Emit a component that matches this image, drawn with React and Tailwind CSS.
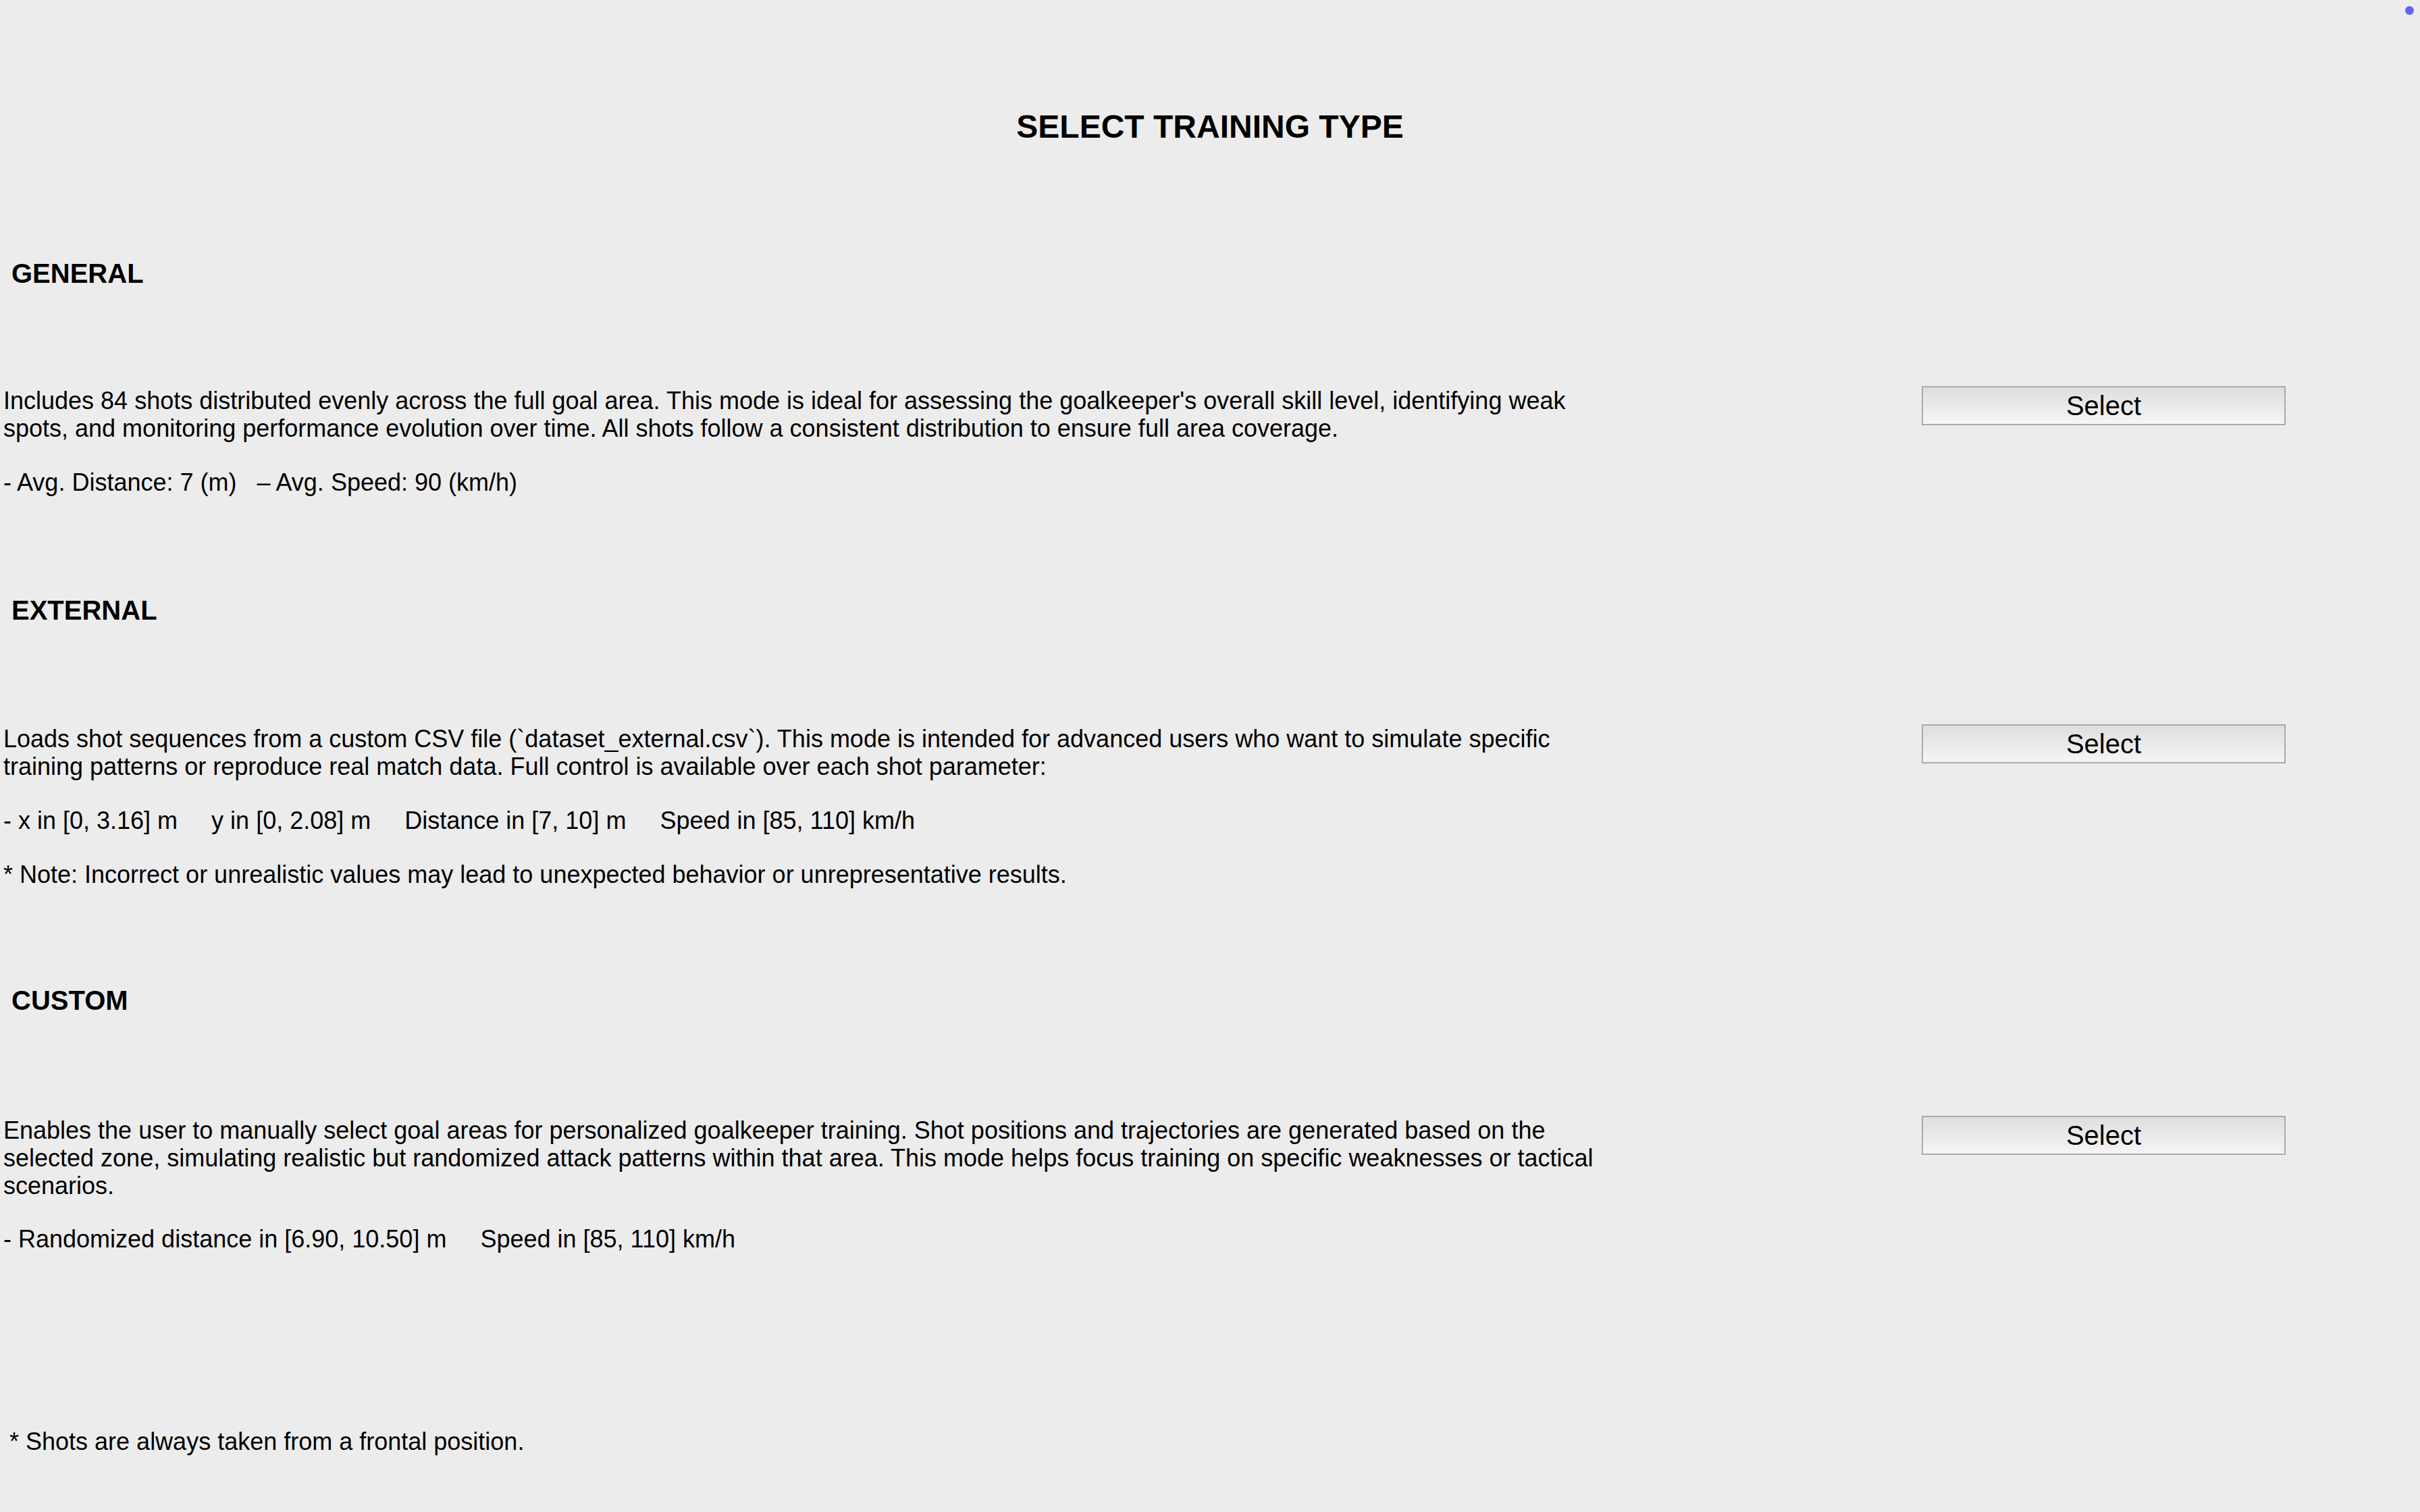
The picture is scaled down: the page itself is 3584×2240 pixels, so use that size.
import React from "react";

function SelectButton() {
  return (
    <button className="ml-[456px] mt-0 flex h-[58px] w-[539px] shrink-0 items-center justify-center border-2 border-[#aaaaaa] bg-gradient-to-b from-[#dedede] to-[#f5f5f5] text-[40px] leading-none text-black">
      Select
    </button>
  );
}

function Row({ children, className }) {
  return (
    <div className={"flex items-start " + className}>
      <div className="w-[2390px] shrink-0 pl-[5px] pt-[1px] text-[36px] leading-[41px] text-black">
        {children}
      </div>
      <SelectButton />
    </div>
  );
}

export default function App() {
  return (
    <div
      className="relative min-h-[2240px] w-full bg-[#ececec] text-black"
      style={{ fontFamily: '"Liberation Sans", Arial, Helvetica, sans-serif' }}
    >
      <div className="absolute right-[9px] top-[9px] h-[13px] w-[13px] rounded-full bg-[#5f66f0]" />

      <h1 className="pt-[160px] text-center text-[48px] font-bold leading-[55px]">
        SELECT TRAINING TYPE
      </h1>

      <h2 className="mt-[167px] pl-[17px] text-[40px] font-bold leading-[46px]">GENERAL</h2>
      <Row className="mt-[144px]">
        <p>
          Includes 84 shots distributed evenly across the full goal area. This mode is ideal for
          assessing the goalkeeper's overall skill level, identifying weak spots, and monitoring
          performance evolution over time. All shots follow a consistent distribution to ensure
          full area coverage.
        </p>
        <p className="mt-[39px] whitespace-pre">{"- Avg. Distance: 7 (m)   – Avg. Speed: 90 (km/h)"}</p>
      </Row>

      <h2 className="mt-[146px] pl-[17px] text-[40px] font-bold leading-[46px]">EXTERNAL</h2>
      <Row className="mt-[146px]">
        <p>
          Loads shot sequences from a custom CSV file (`dataset_external.csv`). This mode is
          intended for advanced users who want to simulate specific training patterns or reproduce
          real match data. Full control is available over each shot parameter:
        </p>
        <p className="mt-[39px] whitespace-pre">
          {"- x in [0, 3.16] m     y in [0, 2.08] m     Distance in [7, 10] m     Speed in [85, 110] km/h"}
        </p>
        <p className="mt-[39px]">
          * Note: Incorrect or unrealistic values may lead to unexpected behavior or
          unrepresentative results.
        </p>
      </Row>

      <h2 className="mt-[143px] pl-[17px] text-[40px] font-bold leading-[46px]">CUSTOM</h2>
      <Row className="mt-[148px]">
        <p>
          Enables the user to manually select goal areas for personalized goalkeeper training. Shot
          positions and trajectories are generated based on the selected zone, simulating realistic
          but randomized attack patterns within that area. This mode helps focus training on
          specific weaknesses or tactical scenarios.
        </p>
        <p className="mt-[38px] whitespace-pre">
          {"- Randomized distance in [6.90, 10.50] m     Speed in [85, 110] km/h"}
        </p>
      </Row>

      <p className="mt-[259px] pl-[14px] text-[36px] leading-[41px]">
        * Shots are always taken from a frontal position.
      </p>
    </div>
  );
}
